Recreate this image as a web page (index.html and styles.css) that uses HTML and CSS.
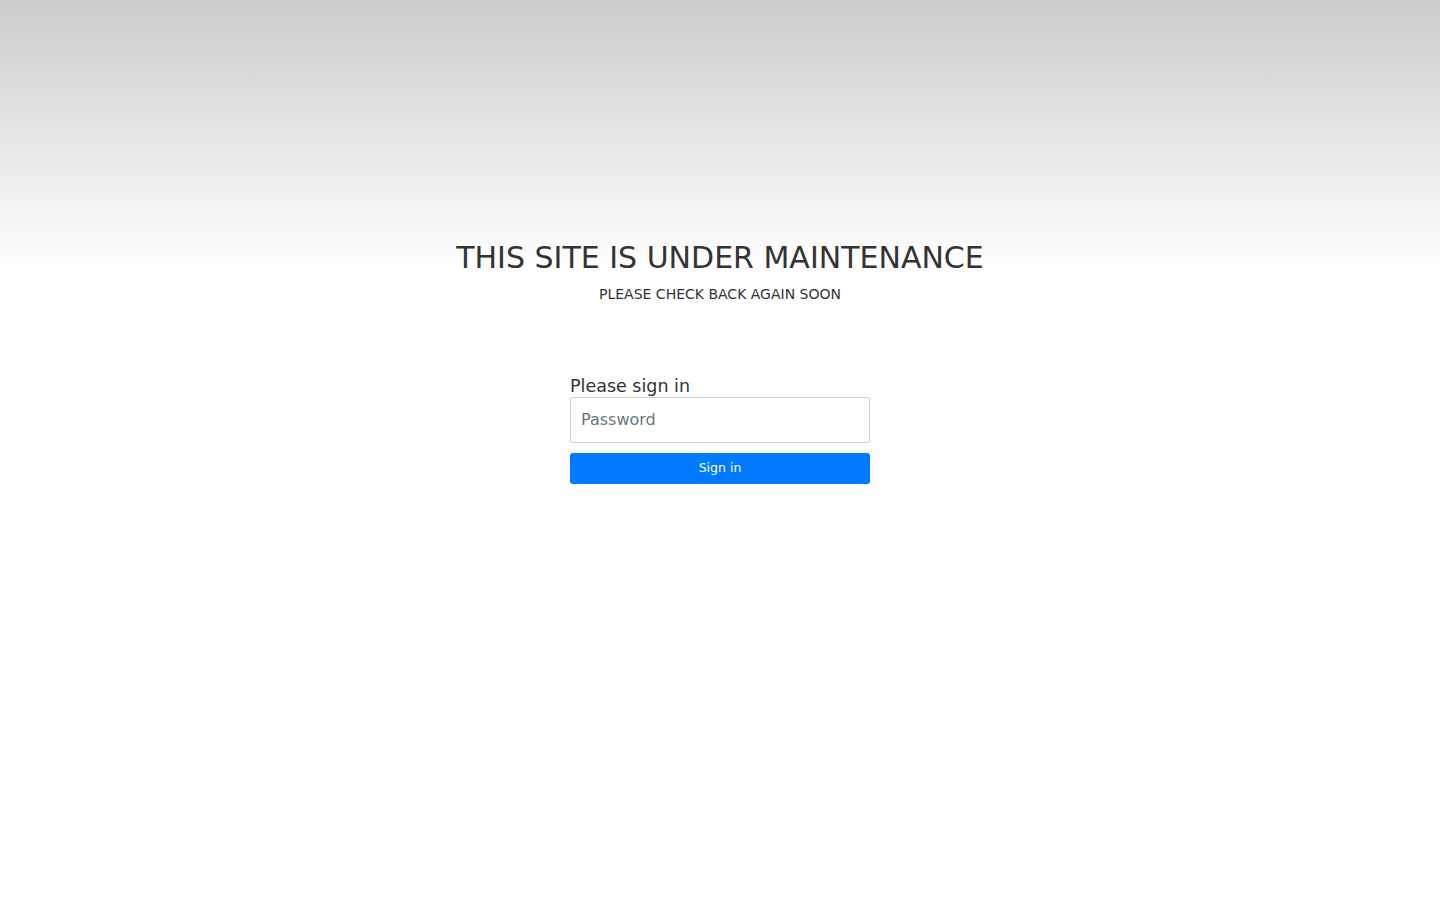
FILE: index.html
```html
<!DOCTYPE html>
<html lang="en">
<head>
    <meta charset="UTF-8">
    <meta name="viewport" content="width=device-width, initial-scale=1.0">
    <title>Under Maintenance</title>
    <link rel="stylesheet" href="styles.css">
</head>
<body>
    <div class="notice">
        <h1>THIS SITE IS UNDER MAINTENANCE</h1>
        <p>PLEASE CHECK BACK AGAIN SOON</p>
    </div>

    <form class="signin" onsubmit="return false">
        <h2>Please sign in</h2>
        <input type="password" class="form-control" placeholder="Password" required>
        <button type="submit" class="btn">Sign in</button>
    </form>
</body>
</html>
```

FILE: styles.css
```css
body {
    font-family: "DejaVu Sans", Verdana, sans-serif;
    margin: 0;
    padding: 0;
    color: #333;
    background-color: #fff;
    background-image: linear-gradient(#cccccc, #ffffff);
    background-repeat: no-repeat;
    background-size: 100% 270px;
    min-height: 100vh;
}
.notice {
    text-align: center;
    padding-top: 239px;
}
.notice h1 {
    font-size: 30px;
    font-weight: normal;
    margin: 0;
    line-height: 38px;
}
.notice p {
    font-size: 14px;
    margin: 7px 0 0;
    line-height: 20px;
}
.signin {
    width: 300px;
    margin: 71px auto 0;
    display: flex;
    flex-direction: column;
}
.signin h2 {
    font-size: 17.5px;
    font-weight: normal;
    margin: 0;
    line-height: 22px;
}
.form-control {
    box-sizing: border-box;
    height: 46px;
    padding: 0 10px 2px;
    font-family: inherit;
    font-size: 16px;
    color: #495057;
    border: 1px solid #ced4da;
    border-radius: 2px;
    outline: none;
}
.form-control::placeholder {
    color: #6c757d;
}
.btn {
    margin-top: 10px;
    height: 31px;
    padding: 0 0 2px;
    background-color: #007bff;
    color: #fff;
    border: none;
    border-radius: 3px;
    font-family: inherit;
    font-size: 12.5px;
    cursor: pointer;
}
.btn:hover {
    background-color: #0069d9;
}
```
